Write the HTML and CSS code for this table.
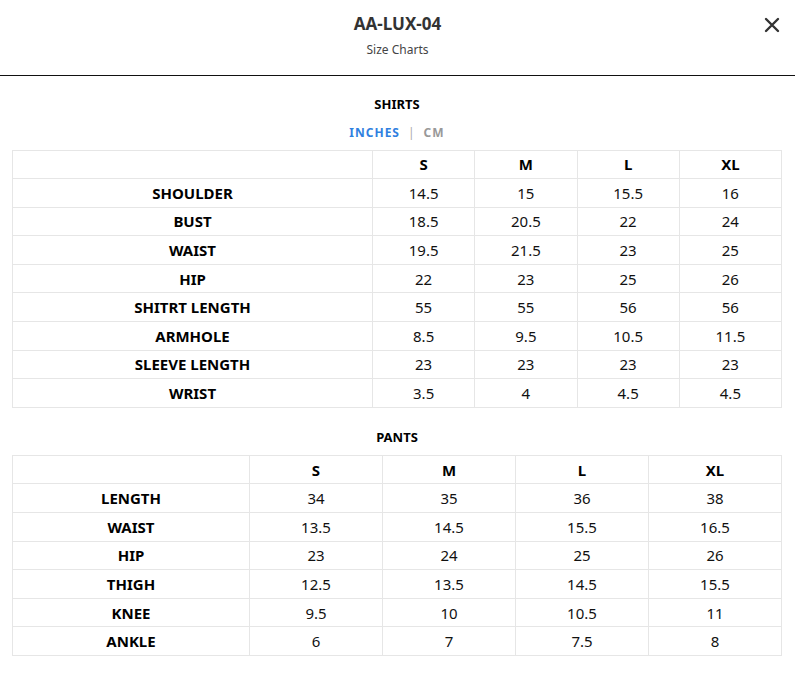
FILE: index.html
```html
<!DOCTYPE html>
<html>
<head>
<meta charset="utf-8">
<link rel="stylesheet" href="styles.css">
</head>
<body>
<header class="header">
  <h1 class="title">AA-LUX-04</h1>
  <div class="subtitle">Size Charts</div>
  <button class="close" aria-label="Close">
    <svg width="16" height="16" viewBox="0 0 16 16"><path d="M2 2L14 14M14 2L2 14" stroke="#333" stroke-width="2.4" stroke-linecap="round"/></svg>
  </button>
</header>
<main class="content">
  <h2 class="section-title">SHIRTS</h2>
  <div class="units"><span class="unit active">INCHES</span><span class="sep">|</span><span class="unit">CM</span></div>
  <table class="chart shirts">
    <colgroup><col class="c-label"><col><col><col><col></colgroup>
    <thead><tr><th></th><th>S</th><th>M</th><th>L</th><th>XL</th></tr></thead>
    <tbody>
      <tr><th>SHOULDER</th><td>14.5</td><td>15</td><td>15.5</td><td>16</td></tr>
      <tr><th>BUST</th><td>18.5</td><td>20.5</td><td>22</td><td>24</td></tr>
      <tr><th>WAIST</th><td>19.5</td><td>21.5</td><td>23</td><td>25</td></tr>
      <tr><th>HIP</th><td>22</td><td>23</td><td>25</td><td>26</td></tr>
      <tr><th>SHITRT LENGTH</th><td>55</td><td>55</td><td>56</td><td>56</td></tr>
      <tr><th>ARMHOLE</th><td>8.5</td><td>9.5</td><td>10.5</td><td>11.5</td></tr>
      <tr><th>SLEEVE LENGTH</th><td>23</td><td>23</td><td>23</td><td>23</td></tr>
      <tr><th>WRIST</th><td>3.5</td><td>4</td><td>4.5</td><td>4.5</td></tr>
    </tbody>
  </table>
  <h2 class="section-title pants-title">PANTS</h2>
  <table class="chart pants">
    <colgroup><col class="c-label"><col><col><col><col></colgroup>
    <thead><tr><th></th><th>S</th><th>M</th><th>L</th><th>XL</th></tr></thead>
    <tbody>
      <tr><th>LENGTH</th><td>34</td><td>35</td><td>36</td><td>38</td></tr>
      <tr><th>WAIST</th><td>13.5</td><td>14.5</td><td>15.5</td><td>16.5</td></tr>
      <tr><th>HIP</th><td>23</td><td>24</td><td>25</td><td>26</td></tr>
      <tr><th>THIGH</th><td>12.5</td><td>13.5</td><td>14.5</td><td>15.5</td></tr>
      <tr><th>KNEE</th><td>9.5</td><td>10</td><td>10.5</td><td>11</td></tr>
      <tr><th>ANKLE</th><td>6</td><td>7</td><td>7.5</td><td>8</td></tr>
    </tbody>
  </table>
</main>
</body>
</html>
```

FILE: styles.css
```css
* { box-sizing: border-box; }
html, body { margin: 0; padding: 0; background: #fff; }
body {
  font-family: "Noto Sans", "Open Sans", sans-serif;
  color: #111;
}
.header {
  position: relative;
  height: 76px;
  border-bottom: 1px solid #111;
  display: flex;
  flex-direction: column;
  align-items: center;
  padding-top: 12px;
}
.title {
  margin: 0;
  font-size: 17px;
  line-height: 24px;
  font-weight: 700;
  color: #333;
}
.subtitle {
  margin-top: 6px;
  font-size: 12px;
  line-height: 16px;
  color: #444;
}
.close {
  position: absolute;
  right: 15px;
  top: 17px;
  width: 16px;
  height: 16px;
  padding: 0;
  border: 0;
  background: none;
  display: flex;
}
.content {
  padding: 19px 13px 0 12px;
  display: flex;
  flex-direction: column;
  align-items: center;
}
.section-title {
  margin: 0;
  font-size: 13px;
  line-height: 18px;
  font-weight: 700;
  color: #000;
}
.pants-title { margin-top: 20.5px; }
.units {
  margin-top: 12px;
  font-size: 12px;
  line-height: 16px;
  font-weight: 700;
  letter-spacing: 1px;
  display: flex;
  gap: 8px;
}
.unit { color: #999; }
.unit.active { color: #2f80e0; }
.sep { color: #aaa; font-weight: 400; }
.chart {
  margin-top: 8.5px;
  width: 770px;
  border-collapse: collapse;
  table-layout: fixed;
  font-size: 15px;
}
.chart th, .chart td {
  border: 1px solid #e6e6e6;
  height: 28.6px;
  padding: 0 4px;
  text-align: center;
  line-height: 18px;
}
.chart th { font-weight: 700; color: #000; }
.chart td { font-weight: 400; color: #111; }
.shirts .c-label { width: 360px; }
.pants .c-label { width: 237px; }
```
